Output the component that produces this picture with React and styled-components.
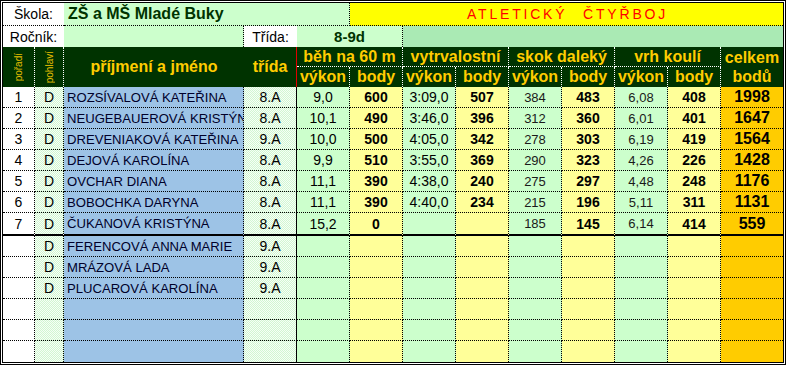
import React from "react";
import styled, { createGlobalStyle } from "styled-components";

const GlobalStyle = createGlobalStyle`
  body {
    margin: 0;
    background: #fff;
  }
`;

const lines = {
  dot: "1px dotted #000",
  wdot: "1px dotted #fff",
  solid: "1px solid #000",
  red: "1px solid #e00000",
  thick: "2px solid #000",
};
const line = (v) => lines[v] || "none";

const pattern = `repeating-conic-gradient(#d2f6d2 0% 25%, #f6fff6 0% 50%) 0 0 / 2px 2px`;

const Sheet = styled.div`
  width: 786px;
  box-sizing: border-box;
  border: 3px double #000;
  display: grid;
  grid-template-columns: 32px 29px 180px 53px repeat(8, 53px) 62px;
  grid-template-rows: 23px 21px 20px 20px repeat(6, 21px) 23px repeat(6, 21px);
  font-family: "Liberation Sans", Arial, sans-serif;
  background: #fff;
`;

const Cell = styled.div`
  box-sizing: border-box;
  grid-column: span ${(p) => p.$span || 1};
  grid-row: span ${(p) => p.$rows || 1};
  background: ${(p) => p.$bg || "transparent"};
  border-right: ${(p) => line(p.$r)};
  border-bottom: ${(p) => line(p.$b)};
  display: flex;
  align-items: center;
  justify-content: ${(p) => (p.$left ? "flex-start" : "center")};
  padding-left: ${(p) => (p.$left ? "3px" : "0")};
  overflow: hidden;
  white-space: nowrap;
  font-size: ${(p) => p.$size || 14}px;
  font-weight: ${(p) => (p.$bold ? 700 : 400)};
  color: ${(p) => p.$color || "#000"};
`;

const SchoolName = styled(Cell)`
  font-size: 16px;
  font-weight: 700;
  color: #003300;
  padding-left: 4px;
`;

const Title = styled(Cell)`
  color: #ff0000;
  font-size: 14px;
  letter-spacing: 2.8px;
  word-spacing: 9px;
  padding-left: 2px;
`;

const HeadCell = styled(Cell)`
  background: #003300;
  color: #ffcc00;
  font-size: 16px;
  font-weight: 700;
`;

const VerticalLabel = styled.span`
  writing-mode: vertical-rl;
  transform: rotate(180deg);
  font-size: 10px;
  font-weight: 400;
  color: #e8c000;
`;

const TotalHead = styled(HeadCell)`
  align-items: ${(p) => (p.$top ? "flex-end" : "flex-start")};
  padding-top: ${(p) => (p.$top ? "0" : "1px")};
`;

const NameCell = styled(Cell)`
  color: #00002a;
  font-size: 13.1px;
`;

const columns = [
  { bg: "#fff", r: "dot" },
  { bg: pattern, r: "dot" },
  { bg: "#9dc3e6", r: "dot" },
  { bg: pattern, r: "solid" },
  { bg: "#ccffcc", r: "dot" },
  { bg: "#ffff99", r: "dot" },
  { bg: "#ccffcc", r: "dot" },
  { bg: "#ffff99", r: "dot" },
  { bg: "#ccffcc", r: "dot" },
  { bg: "#ffff99", r: "dot" },
  { bg: "#ccffcc", r: "dot" },
  { bg: "#ffff99", r: "dot" },
  { bg: "#ffcc00", r: "none" },
];

const rows = [
  ["1", "D", "ROZSÍVALOVÁ KATEŘINA", "8.A", "9,0", "600", "3:09,0", "507", "384", "483", "6,08", "408", "1998"],
  ["2", "D", "NEUGEBAUEROVÁ KRISTÝNA", "8.A", "10,1", "490", "3:46,0", "396", "312", "360", "6,01", "401", "1647"],
  ["3", "D", "DREVENIAKOVÁ KATEŘINA", "9.A", "10,0", "500", "4:05,0", "342", "278", "303", "6,19", "419", "1564"],
  ["4", "D", "DEJOVÁ KAROLÍNA", "8.A", "9,9", "510", "3:55,0", "369", "290", "323", "4,26", "226", "1428"],
  ["5", "D", "OVCHAR DIANA", "8.A", "11,1", "390", "4:38,0", "240", "275", "297", "4,48", "248", "1176"],
  ["6", "D", "BOBOCHKA DARYNA", "8.A", "11,1", "390", "4:40,0", "234", "215", "196", "5,11", "311", "1131"],
  ["7", "D", "ČUKANOVÁ KRISTÝNA", "8.A", "15,2", "0", "", "", "185", "145", "6,14", "414", "559"],
  ["", "D", "FERENCOVÁ ANNA MARIE", "9.A", "", "", "", "", "", "", "", "", ""],
  ["", "D", "MRÁZOVÁ LADA", "9.A", "", "", "", "", "", "", "", "", ""],
  ["", "D", "PLUCAROVÁ KAROLÍNA", "9.A", "", "", "", "", "", "", "", "", ""],
  ["", "", "", "", "", "", "", "", "", "", "", "", ""],
  ["", "", "", "", "", "", "", "", "", "", "", "", ""],
  ["", "", "", "", "", "", "", "", "", "", "", "", ""],
];

const groups = ["běh na 60 m", "vytrvalostní", "skok daleký", "vrh koulí"];

const valueStyle = (ci) => {
  if (ci === 12) return { $bold: true, $size: 16 };
  if (ci >= 4 && ci % 2 === 1) return { $bold: true, $size: 14 };
  if (ci === 8 || ci === 10) return { $size: 13, $color: "#1a1a1a" };
  return { $size: 14 };
};

const DataRow = ({ values, index }) => {
  const bottom = index === 6 ? "thick" : index === rows.length - 1 ? "none" : "dot";
  return values.map((v, ci) => {
    const col = columns[ci];
    if (ci === 2) {
      return (
        <NameCell key={ci} $bg={col.bg} $r={col.r} $b={bottom} $left>
          {v}
        </NameCell>
      );
    }
    return (
      <Cell key={ci} $bg={col.bg} $r={col.r} $b={bottom} {...valueStyle(ci)}>
        {v}
      </Cell>
    );
  });
};

const App = () => {
  return (
    <>
      <GlobalStyle />
      <Sheet>
        <Cell $span={2} $b="dot">Škola:</Cell>
        <SchoolName $span={3} $bg="#ccffcc" $b="dot" $r="dot" $left>
          ZŠ a MŠ Mladé Buky
        </SchoolName>
        <Title $span={8} $bg="#ffff00" $b="dot">
          ATLETICKÝ ČTYŘBOJ
        </Title>

        <Cell $span={2}>Ročník:</Cell>
        <Cell $bg="#ccffcc" $r="dot" />
        <Cell>Třída:</Cell>
        <Cell $span={2} $bg="#ccffcc" $r="dot" $bold $size={15} $color="#003300">
          8-9d
        </Cell>
        <Cell $span={7} $bg="#aaeab4" />

        <HeadCell $rows={2} $r="wdot">
          <VerticalLabel>pořadí</VerticalLabel>
        </HeadCell>
        <HeadCell $rows={2} $r="wdot">
          <VerticalLabel>pohlaví</VerticalLabel>
        </HeadCell>
        <HeadCell $rows={2}>příjmení a jméno</HeadCell>
        <HeadCell $rows={2} $r="red">třída</HeadCell>
        {groups.map((g) => (
          <HeadCell key={g} $span={2} $r="wdot" $b="wdot">
            {g}
          </HeadCell>
        ))}
        <TotalHead $top>celkem</TotalHead>
        {groups.map((g) => (
          <React.Fragment key={g}>
            <HeadCell $r="wdot">výkon</HeadCell>
            <HeadCell $r="wdot">body</HeadCell>
          </React.Fragment>
        ))}
        <TotalHead>bodů</TotalHead>

        {rows.map((r, i) => (
          <DataRow key={i} values={r} index={i} />
        ))}
      </Sheet>
    </>
  );
};

export default App;
